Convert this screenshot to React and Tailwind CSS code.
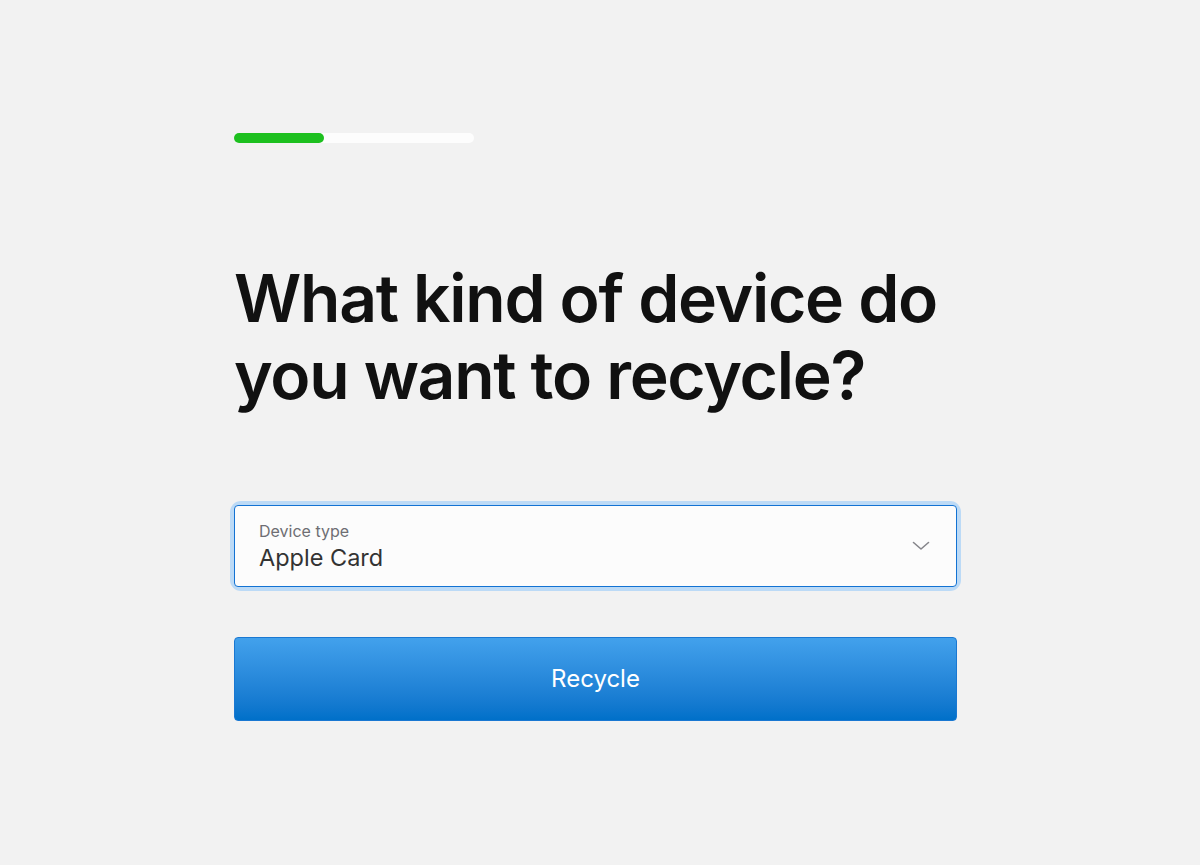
import React from "react";

function Chevron() {
  return (
    <svg width="18" height="10" viewBox="0 0 18 10" fill="none">
      <path
        d="M1.5 1.5L9 8L16.5 1.5"
        stroke="#86868b"
        strokeWidth="1.6"
        strokeLinecap="round"
        strokeLinejoin="round"
      />
    </svg>
  );
}

export default function App() {
  return (
    <div className="min-h-[865px] w-full bg-[#f2f2f2]">
      <div className="ml-[234px] w-[723px] pt-[133px]">
        <div className="h-[10px] w-[240px] rounded-full bg-[#fdfdfd]">
          <div className="h-[10px] w-[90px] rounded-full bg-[#1dc01f]" />
        </div>

        <h1
          className="mt-[117px] whitespace-nowrap text-[66px] font-semibold leading-[77px] tracking-[-1.3px] text-[#111111]"
          style={{ fontFamily: "Inter, 'Noto Sans', sans-serif" }}
        >
          What kind of device do
          <br />
          you want to recycle?
        </h1>

        <div className="mt-[91px] rounded-[7px] shadow-[0_0_0_4px_#bcdaf6]">
          <div className="flex h-[82px] items-center justify-between rounded-[4px] border border-[#1272d3] bg-[#fcfcfc] pl-[24px] pr-[26px]">
            <div
              className="flex flex-col pt-[2px]"
              style={{ fontFamily: "Inter, 'Noto Sans', sans-serif" }}
            >
              <span className="text-[16px] leading-[18px] text-[#6e6e73]">
                Device type
              </span>
              <span className="mt-[4px] text-[23.5px] leading-[28px] text-[#333333]">
                Apple Card
              </span>
            </div>
            <Chevron />
          </div>
        </div>

        <button
          className="mt-[50px] flex h-[84px] w-full items-center justify-center rounded-[4px] border border-[#1a78d2] bg-gradient-to-b from-[#42a1ec] to-[#0070c9] text-[24px] text-white"
          style={{ fontFamily: "Inter, 'Noto Sans', sans-serif" }}
        >
          Recycle
        </button>
      </div>
    </div>
  );
}
